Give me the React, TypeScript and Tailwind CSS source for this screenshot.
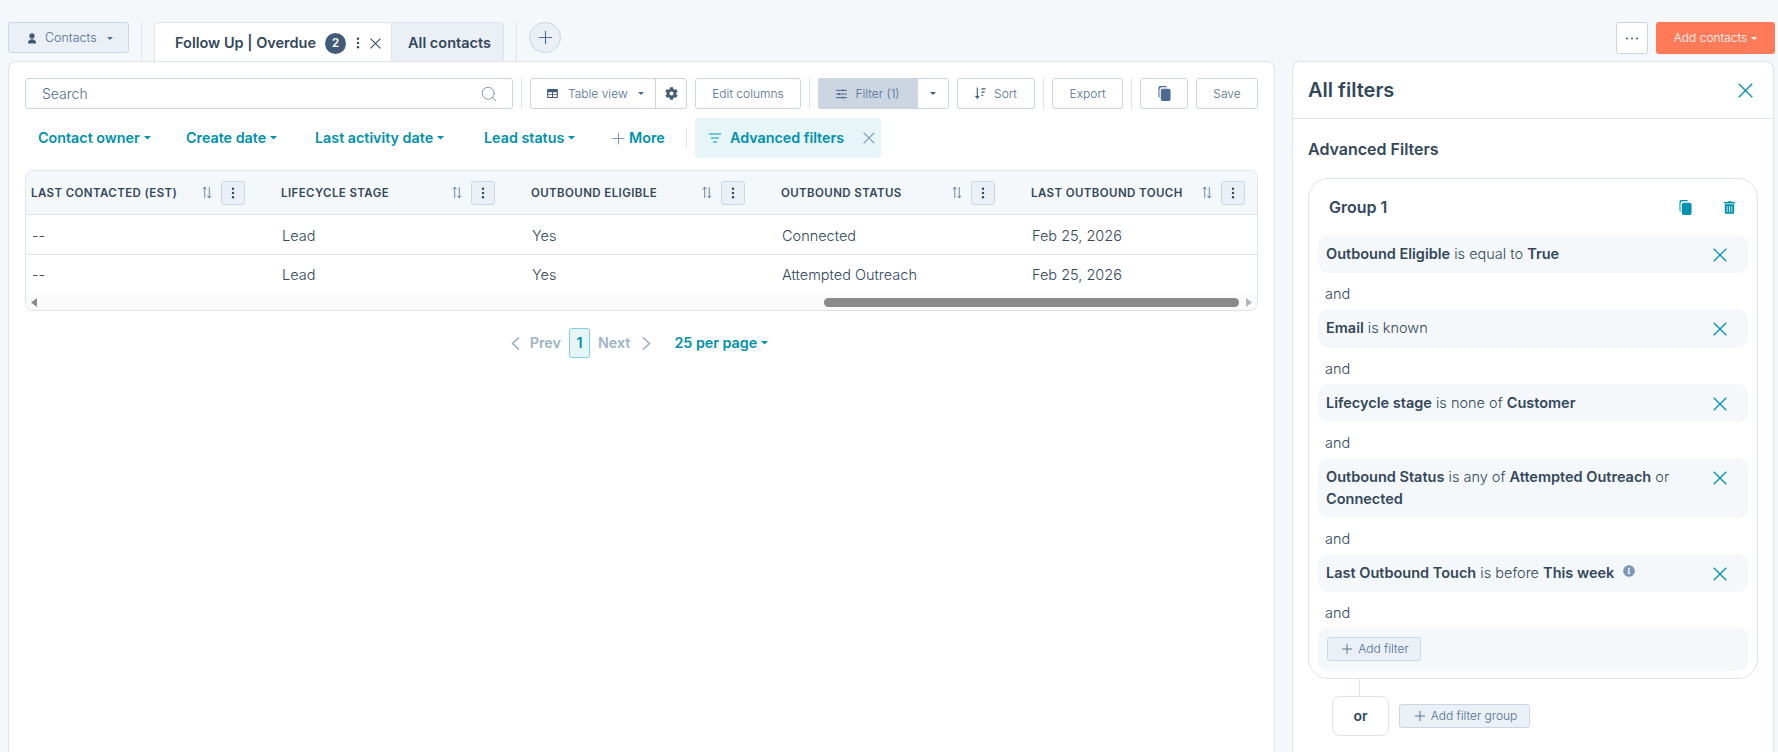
import { Plus, Search } from "lucide-react"
import { FaCog, FaInfoCircle, FaTrashAlt } from "react-icons/fa"

const columns = [
  { title: "LAST CONTACTED (EST)", rows: ["--", "--"] },
  { title: "LIFECYCLE STAGE", rows: ["Lead", "Lead"] },
  { title: "OUTBOUND ELIGIBLE", rows: ["Yes", "Yes"] },
  { title: "OUTBOUND STATUS", rows: ["Connected", "Attempted Outreach"] },
  { title: "LAST OUTBOUND TOUCH", rows: ["Feb 25, 2026", "Feb 25, 2026"] },
]

const quickFilters = [
  { label: "Contact owner", width: "w-[148px]" },
  { label: "Create date", width: "w-[129px]" },
  { label: "Last activity date", width: "w-[169px]" },
  { label: "Lead status", width: "w-[128px]" },
]

function Caret({ className = "", small = false }: { className?: string; small?: boolean }) {
  return (
    <svg viewBox="0 0 8 4" width={small ? 6 : 7} height={small ? 3 : 3.5} fill="currentColor" className={className}>
      <path d="M0 0h8L4 4z" />
    </svg>
  )
}

function Kebab({ className = "" }: { className?: string }) {
  return (
    <svg viewBox="0 0 4 14" width="4" height="14" fill="currentColor" className={className}>
      <circle cx="2" cy="2" r="1.4" />
      <circle cx="2" cy="7" r="1.4" />
      <circle cx="2" cy="12" r="1.4" />
    </svg>
  )
}

function Cross({ size, className = "" }: { size: number; className?: string }) {
  return (
    <svg viewBox="0 0 14 14" width={size} height={size} fill="none" stroke="currentColor" strokeWidth="1.300" className={className}>
      <path d="M.7.7l12.600 12.600M13.300.7L.7 13.300" />
    </svg>
  )
}

function Chevron({ left = false }: { left?: boolean }) {
  return (
    <svg viewBox="0 0 9 13" width="9" height="13" fill="none" stroke="#99acc2" strokeWidth="1.500">
      <path d={left ? "M8 .5L1.500 6.500 8 12.500" : "M1 .5l6.500 6L1 12.500"} />
    </svg>
  )
}

function CopyIcon({ className = "" }: { className?: string }) {
  return (
    <svg viewBox="0 0 14 16" width="13" height="15" fill="currentColor" className={className}>
      <path d="M2.500 0H8a2 2 0 0 1 1.900 1.400H4.400A2.600 2.600 0 0 0 1.600 4v8.800A2 2 0 0 1 .5 11V2a2 2 0 0 1 2-2z" />
      <rect x="3" y="3" width="10.500" height="13" rx="2" />
    </svg>
  )
}

function SortIcon() {
  return (
    <svg viewBox="0 0 11 14" width="10" height="13" className="text-[#516f90]" fill="none" stroke="currentColor" strokeWidth="0.900">
      <path d="M3 13V1M1 3.500L3 1l2 2.500M8 1v12M6 10.500L8 13l2-2.500" />
    </svg>
  )
}

function ToolbarDivider() {
  return <div className="mx-2 h-[31px] w-px bg-[#dfe3eb]" />
}

function ToolButton({ width, children }: { width: string; children: React.ReactNode }) {
  return (
    <button className={`flex h-[31px] items-center justify-center rounded-[3px] border border-[#cbd6e2] bg-white text-xs font-light text-[#506e91] ${width}`}>
      {children}
    </button>
  )
}

function HeaderCell({ title }: { title: string }) {
  return (
    <div className="flex w-[250px] shrink-0 items-center pl-[5px] pr-[31px]">
      <span className="flex-1 pt-[2px] text-[11.5px] font-semibold tracking-[0.4px] text-[#33475b]">{title}</span>
      <span className="mr-[8px] flex w-3 justify-center"><SortIcon /></span>
      <span className="flex h-[24px] w-[24px] items-center justify-center rounded-[3px] border border-[#cbd6e2] bg-[#eaf0f6] text-[#33475b]">
        <Kebab className="h-3 w-1" />
      </span>
    </div>
  )
}

function FilterRow({ children, height = "h-[38px]" }: { children: React.ReactNode; height?: string }) {
  return (
    <div className={`flex items-start rounded-[10px] bg-[#f5f8fa] pl-2 pr-[21px] pt-[8px] ${height}`}>
      <div className="flex-1 text-[14.5px] font-light leading-[22px] text-[#33475b]">{children}</div>
      <Cross size={14} className="mt-[5px] text-[#0091ae]" />
    </div>
  )
}

function And({ height = "h-[36px]" }: { height?: string }) {
  return <div className={`flex items-center pl-[7px] pt-[6px] text-[14.5px] font-light text-[#33475b] ${height}`}>and</div>
}

export default function App() {
  return (
    <div className="flex h-[752px] w-[1778px] flex-col overflow-hidden bg-[#f5f8fa] font-[Inter,sans-serif] text-[#33475b]">
      <div className="flex h-[61px] shrink-0 items-start pl-2 pr-[3px] pt-[22px]">
        <button className="flex h-[31px] w-[121px] items-center rounded-[3px] border border-[#cbd6e2] bg-[#eaf0f6] pl-[18px] pt-px text-[12.5px] font-light text-[#506e91]">
          <svg viewBox="0 0 12 13" width="10" height="11" fill="#425b76" className="mr-[8px]">
            <circle cx="6" cy="3.500" r="3.200" />
            <path d="M1 12.500c0-3 2-5 5-5s5 2 5 5z" />
          </svg>
          Contacts
          <Caret small className="ml-[10px] text-[#506e91]" />
        </button>
        <div className="ml-3 h-[39px] w-px bg-[#dfe3eb]" />
        <div className="ml-3 flex h-[39px] w-[238px] items-center rounded-t-[4px] border border-b-0 border-[#dfe3eb] bg-white pl-[20px] pt-[2px]">
          <span className="w-[150px] text-[14.5px] font-semibold text-[#33475b]">Follow Up | Overdue</span>
          <span className="flex h-[21px] w-[21px] items-center justify-center rounded-full bg-[#425b76] text-xs font-semibold text-white">2</span>
          <Kebab className="ml-[10px] h-[12px] text-[#33475b]" />
          <Cross size={11} className="ml-[10px] text-[#33475b]" />
        </div>
        <div className="flex h-[39px] w-[112px] items-center justify-center rounded-tr-[4px] border border-b-0 border-l-0 border-[#dfe3eb] bg-[#eaf0f6] pl-[4px] pt-[2px] text-[14.5px] font-semibold text-[#33475b]">
          All contacts
        </div>
        <div className="ml-3 h-[39px] w-px bg-[#dfe3eb]" />
        <button className="ml-3 flex h-[31px] w-[32px] items-center justify-center rounded-full border border-[#cbd6e2] bg-[#eaf0f6] text-[#506e91]">
          <Plus className="h-[21px] w-[21px]" strokeWidth={1.3} />
        </button>
        <button className="ml-auto flex h-[32px] w-[32px] items-center justify-center rounded-[3px] border border-[#cbd6e2] bg-white text-[#425b76]">
          <svg viewBox="0 0 14 3" width="14" height="3" fill="currentColor">
            <circle cx="2" cy="1.500" r="1" />
            <circle cx="7" cy="1.500" r="1" />
            <circle cx="12" cy="1.500" r="1" />
          </svg>
        </button>
        <button className="ml-2 flex h-[32px] w-[119px] items-center justify-center rounded-[3px] bg-[#ff7a59] text-xs font-light text-white">
          Add contacts
          <Caret small className="ml-[4px] text-white" />
        </button>
      </div>

      <div className="flex min-h-0 flex-1 pl-2 pr-1">
        <main className="w-[1267px] rounded-t-lg border border-b-0 border-[#dfe3eb] bg-white pl-4 pt-4">
          <div className="flex items-center">
            <div className="flex h-[31px] w-[488px] items-center rounded-[3px] border border-[#cbd6e2] bg-white pl-4 pr-[14px]">
              <span className="flex-1 text-sm font-light text-[#516f90]">Search</span>
              <Search className="h-[18px] w-[18px] text-[#7c98b6]" strokeWidth={1.3} />
            </div>
            <ToolbarDivider />
            <div className="flex h-[31px] w-[157px] rounded-[3px] border border-[#cbd6e2] bg-white text-xs font-light text-[#506e91]">
              <div className="flex w-[125px] items-center border-r border-[#cbd6e2] pl-[16px]">
                <svg viewBox="0 0 12 10" width="11" height="9" className="mr-[10px]" fill="#425b76">
                  <path d="M1 0h10a1 1 0 0 1 1 1v8a1 1 0 0 1-1 1H1a1 1 0 0 1-1-1V1a1 1 0 0 1 1-1zm.2 3.500v2h4.200v-2zm5.400 0v2h4.200v-2zM1.200 6.500v2.300h4.200V6.500zm5.400 0v2.300h4.200V6.500z" fillRule="evenodd" />
                </svg>
                Table view
                <Caret small className="ml-[10px]" />
              </div>
              <div className="flex flex-1 items-center justify-center">
                <FaCog className="h-[13px] w-[13px] text-[#425b76]" />
              </div>
            </div>
            <div className="w-2" />
            <ToolButton width="w-[106px]">Edit columns</ToolButton>
            <ToolbarDivider />
            <div className="flex h-[31px] w-[131px] rounded-[3px] border border-[#cbd6e2] bg-white text-xs font-light text-[#506e91]">
              <div className="-my-px -ml-px flex w-[100px] items-center justify-center rounded-l-[3px] bg-[#cbd6e2]">
                <svg viewBox="0 0 12 11" width="11" height="10" className="mr-[8px]" stroke="#425b76" strokeWidth="1" fill="#425b76">
                  <path d="M0 1.500h12M0 5.500h12M0 9.500h12" />
                  <path d="M7.500 .5v2M3.500 4.500v2M7.500 8.500v2" strokeWidth="1.500" />
                </svg>
                Filter (1)
              </div>
              <div className="flex flex-1 items-center justify-center">
                <Caret small className="text-[#425b76]" />
              </div>
            </div>
            <div className="w-2" />
            <ToolButton width="w-[78px]">
              <svg viewBox="0 0 12 13" width="11" height="13" className="mr-[8px]" stroke="#425b76" fill="none" strokeWidth="1.200">
                <path d="M2.500 0v11.500M.5 9l2 2.500 2-2.500M7 1.500h4.500M7 5h3.500M7 8.500h2" />
              </svg>
              Sort
            </ToolButton>
            <ToolbarDivider />
            <ToolButton width="w-[71px]">Export</ToolButton>
            <ToolbarDivider />
            <ToolButton width="w-[48px]"><CopyIcon className="text-[#4d6b91]" /></ToolButton>
            <div className="w-2" />
            <ToolButton width="w-[62px]">Save</ToolButton>
          </div>

          <div className="mt-[9px] flex h-[40px] items-center pl-[13px] text-[14.3px] font-semibold text-[#0091ae]">
            {quickFilters.map((f) => (
              <button key={f.label} className={`flex items-center ${f.width}`}>
                {f.label}
                <Caret className="ml-[4px]" />
              </button>
            ))}
            <button className="flex w-[74px] items-center">
              <Plus className="-ml-[3px] mr-[1px] h-[19px] w-[19px] text-[#7c98b6]" strokeWidth={1.3} />
              More
            </button>
            <div className="h-[20px] w-px bg-[#dfe3eb]" />
            <div className="ml-2 flex h-[40px] w-[186px] items-center rounded-[3px] bg-[#e5f5f8] pl-[14px]">
              <svg viewBox="0 0 12 10" width="12" height="10" stroke="currentColor" strokeWidth="1.200" className="mr-[9px]">
                <path d="M0 1h12M2 5h8M4 9h4" />
              </svg>
              <span className="flex-1">Advanced filters</span>
              <Cross size={12} className="mr-[6px] text-[#7c98b6]" />
            </div>
          </div>

          <div className="mt-3 w-[1233px] overflow-hidden rounded-lg border border-[#dfe3eb]">
            <div className="flex h-[44px] border-b border-[#dfe3eb] bg-[#f5f8fa]">
              {columns.map((c) => (
                <HeaderCell key={c.title} title={c.title} />
              ))}
            </div>
            {[0, 1].map((i) => (
              <div key={i} className={i === 0 ? "flex h-[40px] border-b border-[#dfe3eb] pt-[2px]" : "flex h-[40px]"}>
                {columns.map((c) => (
                  <div key={c.title} className="flex w-[250px] shrink-0 items-center pl-[6px] text-[14.5px] font-light text-[#33475b]">
                    {c.rows[i]}
                  </div>
                ))}
              </div>
            ))}
            <div className="flex h-[15px] items-center bg-[#fafafa] pl-[5px] text-[#8a8a8a]">
              <svg viewBox="0 0 6 9" width="6" height="9" fill="currentColor"><path d="M6 0v9L0 4.500z" /></svg>
              <div className="ml-[787px] h-[9px] w-[415px] rounded-full bg-[#8a8a8a]" />
              <svg viewBox="0 0 6 9" width="6" height="9" fill="#b5b5b5" className="ml-[7px]"><path d="M0 0v9l6-4.500z" /></svg>
            </div>
          </div>

          <div className="mt-[17px] flex w-[1233px] items-center justify-center pr-[4px] text-[14.3px] font-semibold text-[#9fb3c8]">
            <Chevron left />
            <span className="ml-[10px]">Prev</span>
            <span className="ml-[8px] flex h-[30px] w-[21px] items-center justify-center rounded-[3px] border border-[#7fd1de] bg-[#e5f5f8] text-[#0091ae]">1</span>
            <span className="ml-[8px]">Next</span>
            <span className="ml-[12px]"><Chevron /></span>
            <button className="ml-[23px] flex items-center text-[#0091ae]">
              25 per page
              <Caret className="ml-[4px]" />
            </button>
          </div>
        </main>

        <aside className="ml-[17px] flex-1 rounded-t-lg border border-b-0 border-[#dfe3eb] bg-white">
          <div className="flex h-[57px] items-center border-b border-[#dfe3eb] pl-[15px] pr-[20px]">
            <h2 className="flex-1 text-xl font-semibold text-[#33475b]">All filters</h2>
            <Cross size={15} className="text-[#0091ae]" />
          </div>
          <div className="px-[15px]">
            <h3 className="mt-[19px] text-base font-semibold leading-[22px] text-[#33475b]">Advanced Filters</h3>
            <div className="mt-[18px] rounded-[20px] border border-[#dfe3eb] px-[9px] pb-[7px]">
              <div className="flex h-[56px] items-center pl-[11px] pr-[13px]">
                <span className="flex-1 text-base font-semibold">Group 1</span>
                <CopyIcon className="text-[#0091ae]" />
                <FaTrashAlt className="ml-[32px] h-[13px] w-[11px] text-[#0091ae]" />
              </div>
              <FilterRow>
                <b className="font-semibold">Outbound Eligible</b> is equal to <b className="font-semibold">True</b>
              </FilterRow>
              <And />
              <FilterRow height="h-[39px]">
                <b className="font-semibold">Email</b> is known
              </FilterRow>
              <And />
              <FilterRow>
                <b className="font-semibold">Lifecycle stage</b> is none of <b className="font-semibold">Customer</b>
              </FilterRow>
              <And />
              <FilterRow height="h-[60px]">
                <b className="font-semibold">Outbound Status</b> is any of <b className="font-semibold">Attempted Outreach</b> or
                <br />
                <b className="font-semibold">Connected</b>
              </FilterRow>
              <And />
              <FilterRow>
                <span className="inline-flex items-center">
                  <span>
                    <b className="font-semibold">Last Outbound Touch</b> is before <b className="font-semibold">This week</b>
                  </span>
                  <FaInfoCircle className="mb-[4px] ml-[9px] h-[12px] w-[12px] text-[#7c98b6]" />
                </span>
              </FilterRow>
              <And height="h-[35px]" />
              <div className="flex h-[44px] items-center rounded-[10px] bg-[#f5f8fa] pl-[9px]">
                <button className="flex h-[24px] w-[94px] items-center justify-center rounded-[3px] border border-[#cbd6e2] bg-[#eaf0f6] text-xs font-light text-[#506e91]">
                  <Plus className="mr-[3px] h-[16px] w-[16px]" strokeWidth={1.4} />
                  Add filter
                </button>
              </div>
            </div>
            <div className="ml-[51px] h-[17px] w-px bg-[#dfe3eb]" />
            <div className="ml-[24px] flex items-center">
              <div className="flex h-[40px] w-[57px] items-center justify-center rounded-lg border border-[#dfe3eb] bg-white text-sm font-semibold">or</div>
              <button className="ml-[10px] flex h-[24px] w-[131px] items-center justify-center rounded-[3px] border border-[#cbd6e2] bg-[#eaf0f6] text-xs font-light text-[#506e91]">
                <Plus className="mr-[3px] h-[16px] w-[16px]" strokeWidth={1.4} />
                Add filter group
              </button>
            </div>
          </div>
        </aside>
      </div>
    </div>
  )
}
